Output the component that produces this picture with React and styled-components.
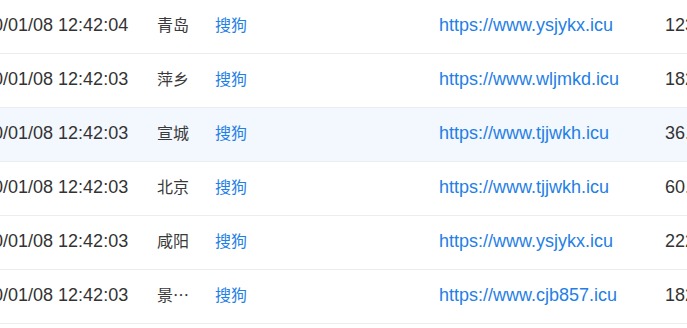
import React from "react";
import styled, { createGlobalStyle } from "styled-components";

const GlobalStyle = createGlobalStyle`
  html, body {
    margin: 0;
    padding: 0;
    background: #ffffff;
  }
  body {
    font-family: "Liberation Sans", "Noto Sans CJK SC", sans-serif;
    overflow: hidden;
  }
`;

// the table is scrolled sideways, so the first column is cut at the left edge
const Viewport = styled.div`
  width: 687px;
  height: 328px;
  overflow: hidden;
`;

const Table = styled.div`
  width: 860px;
  margin-left: -47px;
`;

const Row = styled.div`
  display: grid;
  grid-template-columns: 194px 58px 224px 226px 158px;
  align-items: center;
  height: 53px;
  border-bottom: 1px solid #ebedf0;
  background: ${(p) => (p.$hover ? "#f3f7fe" : "#ffffff")};
`;

const Cell = styled.div`
  padding: 0 10px 3px;
  white-space: nowrap;
  overflow: hidden;
  text-overflow: ellipsis;
  font-size: 18px;
  color: #333333;
`;

const CjkCell = styled(Cell)`
  padding-bottom: 5px;
  font-family: "Noto Sans CJK SC", sans-serif;
  font-size: 16px;
  color: ${(p) => (p.$link ? "#1f80e6" : "#3a3a3a")};
`;

const Link = styled(Cell)`
  color: #1f80e6;
`;

const rows = [
  { time: "2020/01/08 12:42:04", city: "青岛", site: "https://www.ysjykx.icu", ip: "123.125.71.38" },
  { time: "2020/01/08 12:42:03", city: "萍乡", site: "https://www.wljmkd.icu", ip: "182.92.114.5" },
  { time: "2020/01/08 12:42:03", city: "宣城", site: "https://www.tjjwkh.icu", ip: "36.33.20.117", hover: true },
  { time: "2020/01/08 12:42:03", city: "北京", site: "https://www.tjjwkh.icu", ip: "60.247.3.16" },
  { time: "2020/01/08 12:42:03", city: "咸阳", site: "https://www.ysjykx.icu", ip: "222.91.42.8" },
  { time: "2020/01/08 12:42:03", city: "景德镇", site: "https://www.cjb857.icu", ip: "182.106.7.90" },
];

export default function App() {
  return (
    <Viewport>
      <GlobalStyle />
      <Table>
        {rows.map((r, i) => (
          <Row key={i} $hover={r.hover}>
            <Cell>{r.time}</Cell>
            <CjkCell>{r.city}</CjkCell>
            <CjkCell $link>搜狗</CjkCell>
            <Link>{r.site}</Link>
            <Cell>{r.ip}</Cell>
          </Row>
        ))}
      </Table>
    </Viewport>
  );
}
